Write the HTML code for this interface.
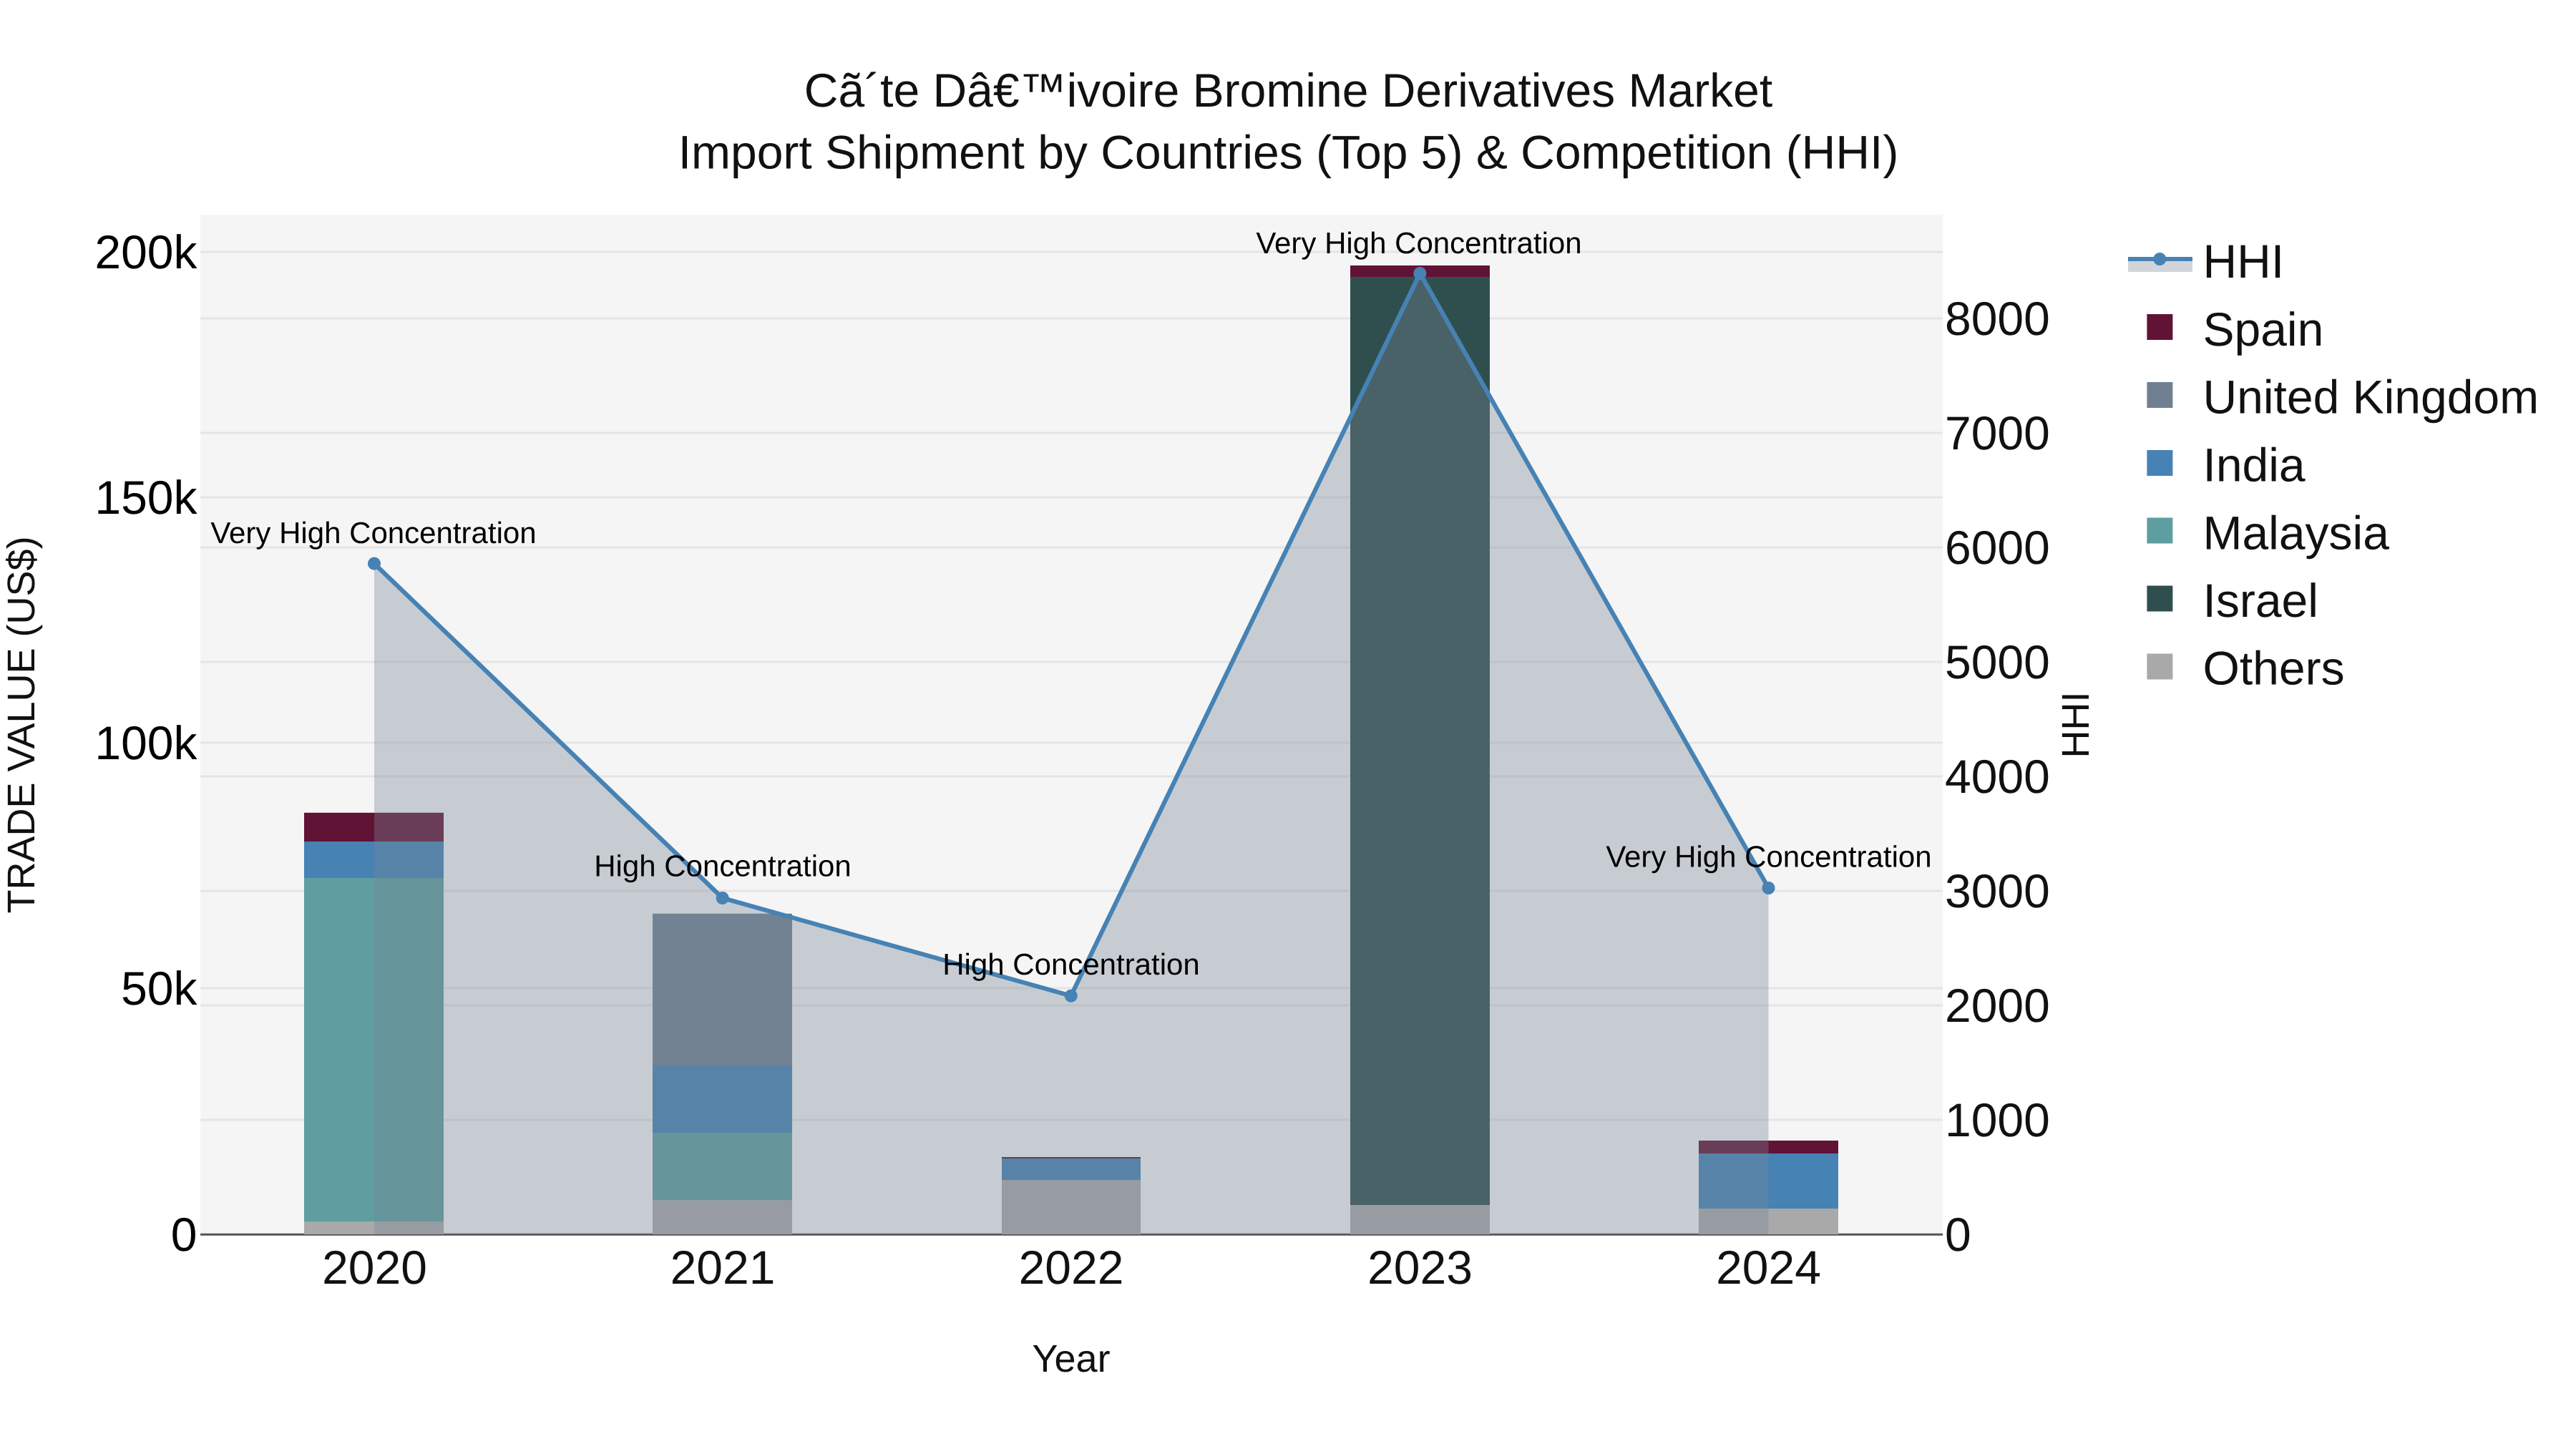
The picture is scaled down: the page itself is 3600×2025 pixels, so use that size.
<!DOCTYPE html>
<html>
<head>
<meta charset="utf-8">
<style>
html,body{margin:0;padding:0;background:#fff;width:3600px;height:2025px;overflow:hidden}
svg{display:block}
text{font-family:"Liberation Sans",Arial,sans-serif;text-rendering:geometricPrecision}
.t{font-size:66px;fill:#111}
.l{font-size:66px;fill:#000;text-anchor:end}
.x{font-size:66px;fill:#111;text-anchor:middle}
.r{font-size:66px;fill:#111}
.a{font-size:42px;fill:#000;text-anchor:middle}
.g{font-size:66px;fill:#111}
.at{font-size:54px;fill:#111;text-anchor:middle}
</style>
</head>
<body>
<svg xmlns="http://www.w3.org/2000/svg" width="3600" height="2025" viewBox="0 0 3600 2025">
<rect width="3600" height="2025" fill="#fff"/>
<rect x="280" y="300" width="2435" height="1425" fill="#f5f5f5"/>
<g stroke="#e5e5e5" stroke-width="3" fill="none">
<path d="M280 352H2715M280 695H2715M280 1038H2715M280 1381H2715"/>
<path d="M280 445H2715M280 605H2715M280 765H2715M280 925H2715M280 1085H2715M280 1245H2715M280 1405H2715M280 1565H2715"/>
</g>
<path d="M280 1725.2H2715" stroke="#555" stroke-width="3"/>
<g>
<!-- 2020 -->
<rect x="425" y="1707.3" width="195" height="17.7" fill="#a9a9a9"/>
<rect x="425" y="1227" width="195" height="480.3" fill="#5f9ea0"/>
<rect x="425" y="1176" width="195" height="51" fill="#4682b4"/>
<rect x="425" y="1135.8" width="195" height="40.2" fill="#611335"/>
<!-- 2021 -->
<rect x="912" y="1677.3" width="195" height="47.7" fill="#a9a9a9"/>
<rect x="912" y="1583" width="195" height="94.3" fill="#5f9ea0"/>
<rect x="912" y="1488.5" width="195" height="94.5" fill="#4682b4"/>
<rect x="912" y="1276.8" width="195" height="211.7" fill="#708090"/>
<!-- 2022 -->
<rect x="1400" y="1649" width="194" height="76" fill="#a9a9a9"/>
<rect x="1400" y="1619" width="194" height="30" fill="#4682b4"/>
<rect x="1400" y="1617" width="194" height="2" fill="#611335"/>
<!-- 2023 -->
<rect x="1887" y="1684" width="195" height="41" fill="#a9a9a9"/>
<rect x="1887" y="387.7" width="195" height="1296.3" fill="#2f4f4f"/>
<rect x="1887" y="371" width="195" height="16.7" fill="#611335"/>
<!-- 2024 -->
<rect x="2374" y="1689" width="195" height="36" fill="#a9a9a9"/>
<rect x="2374" y="1612" width="195" height="77" fill="#4682b4"/>
<rect x="2374" y="1594" width="195" height="18" fill="#611335"/>
</g>
<path d="M523 787.6L1009.7 1255L1496.7 1391.7L1984.4 382L2471.5 1241V1725H523Z" fill="rgb(120,134,150)" fill-opacity="0.36"/>
<path d="M523 787.6L1009.7 1255L1496.7 1391.7L1984.4 382L2471.5 1241" fill="none" stroke="#4682b4" stroke-width="6.2" stroke-linejoin="round"/>
<g fill="#4682b4">
<circle cx="523" cy="787.6" r="9"/>
<circle cx="1009.7" cy="1255" r="9"/>
<circle cx="1496.7" cy="1391.7" r="9"/>
<circle cx="1984.4" cy="382" r="9"/>
<circle cx="2471.5" cy="1241" r="9"/>
</g>
<text class="a" x="522" y="759">Very High Concentration</text>
<text class="a" x="1010" y="1224.5">High Concentration</text>
<text class="a" x="1497" y="1362">High Concentration</text>
<text class="a" x="1983" y="354">Very High Concentration</text>
<text class="a" x="2472" y="1211.5">Very High Concentration</text>

<text class="t" x="1800.5" y="149" text-anchor="middle">Cã´te Dâ€™ivoire Bromine Derivatives Market</text>
<text class="t" x="1800.5" y="235.7" text-anchor="middle">Import Shipment by Countries (Top 5) &amp; Competition (HHI)</text>

<text class="l" x="275.5" y="375">200k</text>
<text class="l" x="275.5" y="718">150k</text>
<text class="l" x="275.5" y="1061">100k</text>
<text class="l" x="275.5" y="1404">50k</text>
<text class="l" x="275.5" y="1748">0</text>

<text class="x" x="523.5" y="1794">2020</text>
<text class="x" x="1010" y="1794">2021</text>
<text class="x" x="1497" y="1794">2022</text>
<text class="x" x="1984.5" y="1794">2023</text>
<text class="x" x="2471.5" y="1794">2024</text>

<text class="r" x="2718" y="468">8000</text>
<text class="r" x="2718" y="628">7000</text>
<text class="r" x="2718" y="788">6000</text>
<text class="r" x="2718" y="948">5000</text>
<text class="r" x="2718" y="1108">4000</text>
<text class="r" x="2718" y="1268">3000</text>
<text class="r" x="2718" y="1428">2000</text>
<text class="r" x="2718" y="1588">1000</text>
<text class="r" x="2718" y="1748">0</text>

<text class="at" x="1497" y="1917">Year</text>
<text class="at" transform="translate(48 1013) rotate(-90)" x="0" y="0">TRADE VALUE (US$)</text>
<text class="at" transform="translate(2919 1013) rotate(-90)" x="0" y="0">HHI</text>

<rect x="2974" y="362" width="90" height="18" fill="#d1d5da"/>
<path d="M2974 362H3064" stroke="#4682b4" stroke-width="6"/>
<circle cx="3018.3" cy="362" r="9" fill="#4682b4"/>
<rect x="3000.4" y="439" width="36" height="36" fill="#611335"/>
<rect x="3000.4" y="534" width="36" height="36" fill="#708090"/>
<rect x="3000.4" y="629" width="36" height="36" fill="#4682b4"/>
<rect x="3000.4" y="723.5" width="36" height="36" fill="#5f9ea0"/>
<rect x="3000.4" y="818.5" width="36" height="36" fill="#2f4f4f"/>
<rect x="3000.4" y="913.5" width="36" height="36" fill="#a9a9a9"/>
<text class="g" x="3078.5" y="388">HHI</text>
<text class="g" x="3078.5" y="483">Spain</text>
<text class="g" x="3078.5" y="577.5">United Kingdom</text>
<text class="g" x="3078.5" y="672.5">India</text>
<text class="g" x="3078.5" y="767.5">Malaysia</text>
<text class="g" x="3078.5" y="862">Israel</text>
<text class="g" x="3078.5" y="956.5">Others</text>
</svg>
</body>
</html>
